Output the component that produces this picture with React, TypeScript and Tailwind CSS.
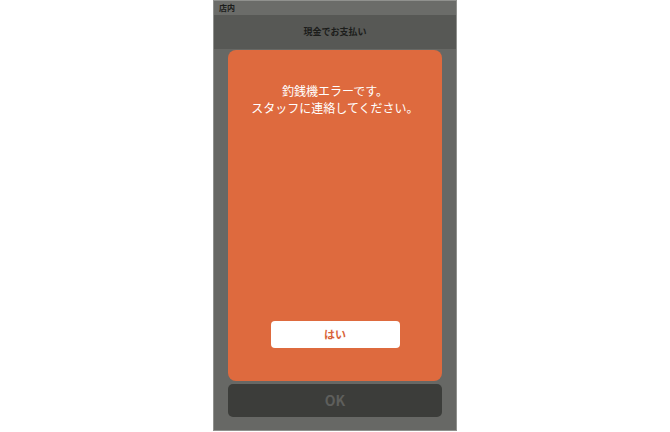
export default function App() {
    return (
        <div
            className="w-[670px] h-[432px] bg-white flex justify-center"
            style={{ fontFamily: '"Noto Sans CJK JP", "Noto Sans", sans-serif' }}
        >
            <div className="w-[244px] h-[431px] border border-[#90918e] bg-[#676865] flex flex-col">
                {/* Status bar */}
                <div className="h-[14px] bg-[#6b6c69] flex items-center px-[5px]">
                    <span className="text-[8px] font-bold leading-none text-[#1c1d1b]">店内</span>
                </div>

                {/* Header */}
                <div className="h-[34px] bg-[#575855] flex items-center justify-center">
                    <span className="text-[9px] font-bold text-[#1c1d1b]">現金でお支払い</span>
                </div>

                {/* Body */}
                <div className="flex-1 flex flex-col gap-[3px] px-[14px] pt-[1px]">
                    <div className="h-[331px] rounded-[8px] bg-[#de6a3e] flex flex-col items-center justify-between pt-[32px] pb-[33px]">
                        <p className="text-[12px] leading-[17px] text-white text-center">
                            釣銭機エラーです。
                            <br />
                            スタッフに連絡してください。
                        </p>
                        <button className="w-[129px] h-[27px] rounded-[4px] bg-white text-[#d8643a] text-[11px] font-bold">
                            はい
                        </button>
                    </div>
                    <div className="h-[33px] rounded-[5px] bg-[#3c3d3a] flex items-center justify-center">
                        <span className="text-[14px] font-bold text-[#5e5f5c]">OK</span>
                    </div>
                </div>
            </div>
        </div>
    );
}
